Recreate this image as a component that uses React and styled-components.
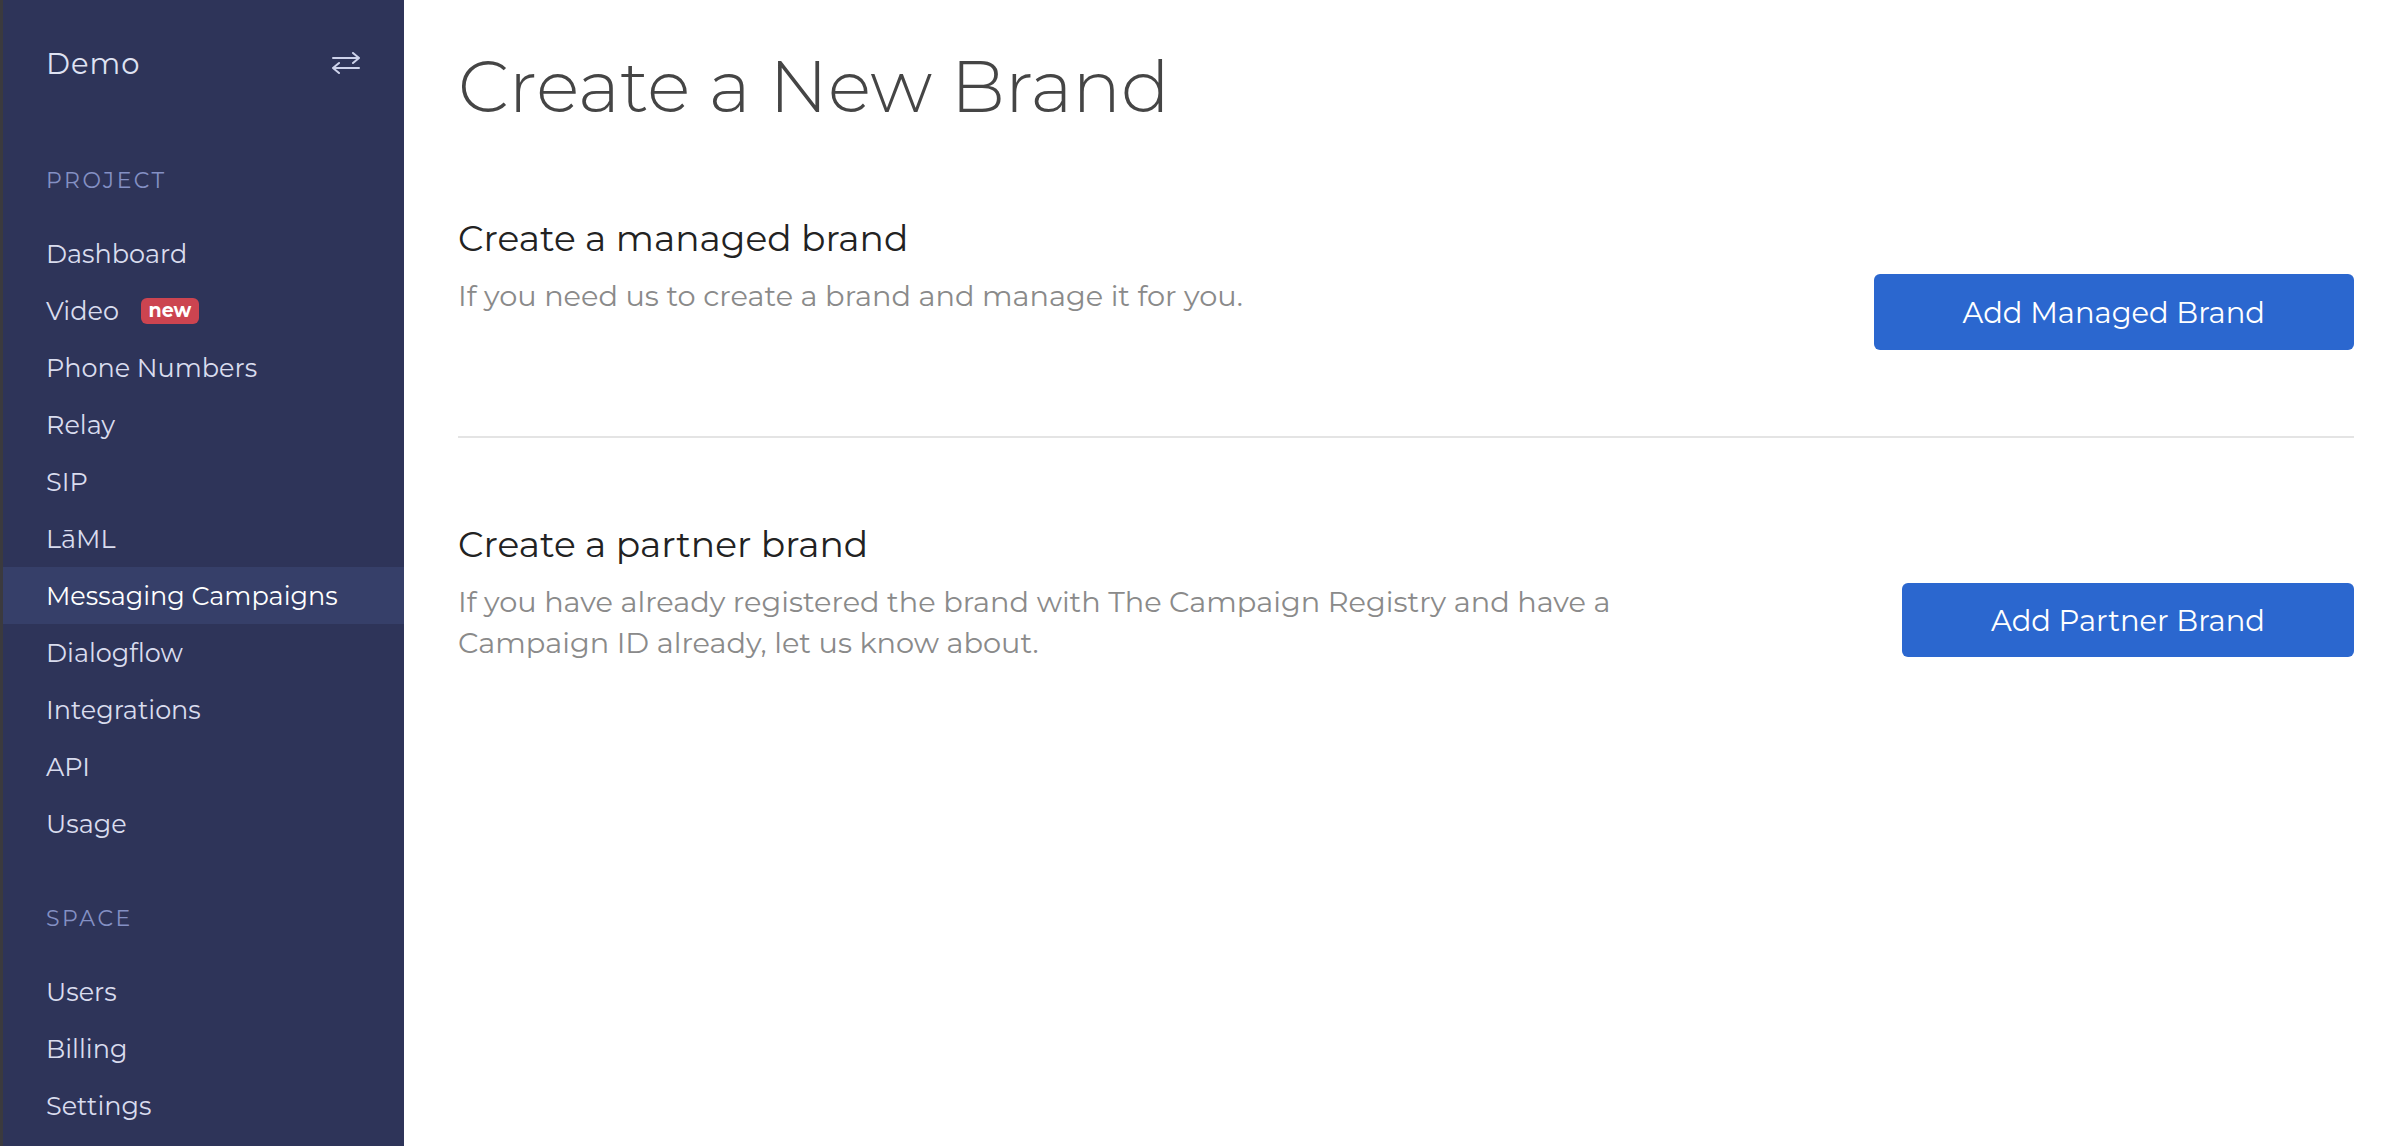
import React from 'react';
import styled, { createGlobalStyle } from 'styled-components';

const GlobalStyle = createGlobalStyle`
  html, body {
    margin: 0;
    padding: 0;
    background: #ffffff;
    font-family: Montserrat, "DejaVu Sans", "Liberation Sans", sans-serif;
  }
  * {
    box-sizing: border-box;
  }
`;

const Layout = styled.div`
  display: flex;
  width: 2408px;
  height: 1146px;
  overflow: hidden;
`;

const Sidebar = styled.nav`
  width: 404px;
  flex-shrink: 0;
  background: #2e3459;
  border-left: 3px solid #3b3a3e;
  color: #d9dcee;
`;

const SidebarHeader = styled.div`
  height: 126px;
  display: flex;
  align-items: center;
  justify-content: space-between;
  padding: 0 43px 0 43px;
`;

const SpaceName = styled.span`
  font-size: 29px;
  letter-spacing: 1px;
  color: #dfe2f2;
`;

const SwapButton = styled.button`
  background: none;
  border: 0;
  padding: 0;
  display: flex;
  color: #cdd2ea;
  cursor: pointer;
`;

const SectionLabel = styled.div`
  margin-top: ${(p) => p.$top}px;
  padding-left: 43px;
  height: 30px;
  line-height: 30px;
  font-size: 22px;
  letter-spacing: 2.5px;
  color: #8490c4;
`;

const NavList = styled.ul`
  list-style: none;
  margin: 29px 0 0;
  padding: 0;
`;

const NavItem = styled.li`
  height: 57px;
  display: flex;
  align-items: center;
  gap: 22px;
  padding-left: 43px;
  font-size: 25.5px;
  color: ${(p) => (p.$active ? '#ffffff' : '#d9dcee')};
  background: ${(p) => (p.$active ? '#363f69' : 'transparent')};
`;

const Badge = styled.span`
  display: inline-flex;
  align-items: center;
  justify-content: center;
  width: 58px;
  height: 26px;
  border-radius: 6px;
  background: #cc4450;
  color: #ffffff;
  font-size: 19px;
  font-weight: 700;
`;

const Main = styled.main`
  flex: 1;
  padding: 50px 54px 0;
`;

const PageTitle = styled.h1`
  margin: 0;
  font-size: 72px;
  line-height: 73px;
  font-weight: 300;
  color: #454545;
`;

const BrandRow = styled.section`
  display: flex;
  justify-content: space-between;
  align-items: flex-start;
  margin-top: ${(p) => p.$top}px;
`;

const BrandText = styled.div`
  max-width: 1180px;
`;

const BrandHeading = styled.h2`
  margin: 0;
  font-size: 36px;
  line-height: 42px;
  font-weight: 400;
  color: #222222;
`;

const BrandDescription = styled.p`
  margin: 16px 0 0;
  font-size: 28.8px;
  line-height: 41px;
  color: #8a8a8a;
`;

const PrimaryButton = styled.button`
  margin-top: ${(p) => p.$offset}px;
  height: ${(p) => p.$height}px;
  padding: 0 89px;
  border: 0;
  border-radius: 6px;
  background: #2b67cf;
  color: #ffffff;
  font-family: inherit;
  font-size: 29px;
  white-space: nowrap;
  cursor: pointer;
`;

const Divider = styled.hr`
  margin: 86px 0 0;
  border: 0;
  height: 2px;
  background: #e4e4e4;
`;

const SwapIcon = () => (
  <svg width="30" height="22" viewBox="0 0 30 22" fill="none" stroke="currentColor" strokeWidth="2" strokeLinecap="round" strokeLinejoin="round">
    <path d="M2 6h26M22 1l6 5-6 5" />
    <path d="M28 16H2M8 11l-6 5 6 5" />
  </svg>
);

const projectItems = [
  'Dashboard',
  'Video',
  'Phone Numbers',
  'Relay',
  'SIP',
  'LāML',
  'Messaging Campaigns',
  'Dialogflow',
  'Integrations',
  'API',
  'Usage',
];

const spaceItems = ['Users', 'Billing', 'Settings'];

const App = () => {
  return (
    <Layout>
      <GlobalStyle />
      <Sidebar>
        <SidebarHeader>
          <SpaceName>Demo</SpaceName>
          <SwapButton aria-label="Switch space">
            <SwapIcon />
          </SwapButton>
        </SidebarHeader>

        <SectionLabel $top={40}>PROJECT</SectionLabel>
        <NavList>
          {projectItems.map((item) => (
            <NavItem key={item} $active={item === 'Messaging Campaigns'}>
              {item}
              {item === 'Video' && <Badge>new</Badge>}
            </NavItem>
          ))}
        </NavList>

        <SectionLabel $top={52}>SPACE</SectionLabel>
        <NavList>
          {spaceItems.map((item) => (
            <NavItem key={item}>{item}</NavItem>
          ))}
        </NavList>
      </Sidebar>

      <Main>
        <PageTitle>Create a New Brand</PageTitle>

        <BrandRow $top={94}>
          <BrandText>
            <BrandHeading>Create a managed brand</BrandHeading>
            <BrandDescription>If you need us to create a brand and manage it for you.</BrandDescription>
          </BrandText>
          <PrimaryButton $offset={57} $height={76}>Add Managed Brand</PrimaryButton>
        </BrandRow>

        <Divider />

        <BrandRow $top={85}>
          <BrandText>
            <BrandHeading>Create a partner brand</BrandHeading>
            <BrandDescription>
              If you have already registered the brand with The Campaign Registry and have a Campaign ID already, let us know about.
            </BrandDescription>
          </BrandText>
          <PrimaryButton $offset={60} $height={74}>Add Partner Brand</PrimaryButton>
        </BrandRow>
      </Main>
    </Layout>
  );
};

export default App;
